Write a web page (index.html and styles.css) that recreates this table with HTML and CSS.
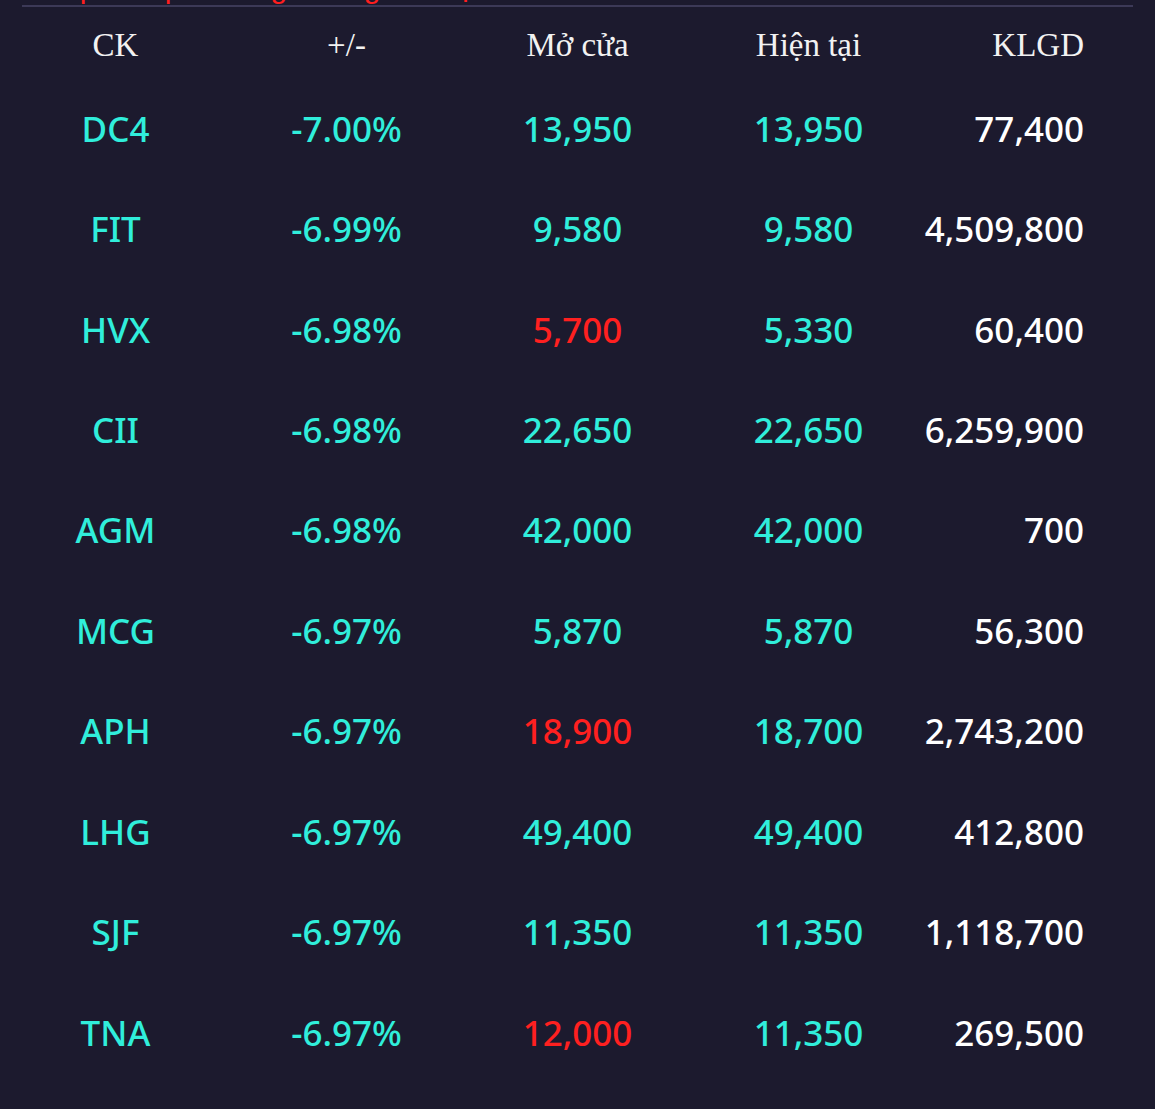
FILE: index.html
```html
<!DOCTYPE html>
<html lang="vi">
<head>
<meta charset="utf-8">
<title>Top giảm giá</title>
<link rel="stylesheet" href="styles.css">
</head>
<body>
<div class="page">
  <div class="title-clip"><div class="title">Top cổ phiếu giảm giá mạnh nhất</div></div>
  <div class="rule"></div>
  <div class="table">
    <div class="row head">
      <div class="c">CK</div><div class="c">+/-</div><div class="c">Mở cửa</div><div class="c">Hiện tại</div><div class="c r">KLGD</div>
    </div>
    <div class="row"><div class="c cy">DC4</div><div class="c cy">-7.00%</div><div class="c cy">13,950</div><div class="c cy">13,950</div><div class="c r wh">77,400</div></div>
    <div class="row"><div class="c cy">FIT</div><div class="c cy">-6.99%</div><div class="c cy">9,580</div><div class="c cy">9,580</div><div class="c r wh">4,509,800</div></div>
    <div class="row"><div class="c cy">HVX</div><div class="c cy">-6.98%</div><div class="c rd">5,700</div><div class="c cy">5,330</div><div class="c r wh">60,400</div></div>
    <div class="row"><div class="c cy">CII</div><div class="c cy">-6.98%</div><div class="c cy">22,650</div><div class="c cy">22,650</div><div class="c r wh">6,259,900</div></div>
    <div class="row"><div class="c cy">AGM</div><div class="c cy">-6.98%</div><div class="c cy">42,000</div><div class="c cy">42,000</div><div class="c r wh">700</div></div>
    <div class="row"><div class="c cy">MCG</div><div class="c cy">-6.97%</div><div class="c cy">5,870</div><div class="c cy">5,870</div><div class="c r wh">56,300</div></div>
    <div class="row"><div class="c cy">APH</div><div class="c cy">-6.97%</div><div class="c rd">18,900</div><div class="c cy">18,700</div><div class="c r wh">2,743,200</div></div>
    <div class="row"><div class="c cy">LHG</div><div class="c cy">-6.97%</div><div class="c cy">49,400</div><div class="c cy">49,400</div><div class="c r wh">412,800</div></div>
    <div class="row"><div class="c cy">SJF</div><div class="c cy">-6.97%</div><div class="c cy">11,350</div><div class="c cy">11,350</div><div class="c r wh">1,118,700</div></div>
    <div class="row"><div class="c cy">TNA</div><div class="c cy">-6.97%</div><div class="c rd">12,000</div><div class="c cy">11,350</div><div class="c r wh">269,500</div></div>
  </div>
</div>
</body>
</html>
```

FILE: styles.css
```css
html, body {
  margin: 0;
  padding: 0;
  background: #1c1a2e;
}
.page {
  width: 1155px;
  height: 1109px;
  overflow: hidden;
  background: #1c1a2e;
}
.title-clip {
  height: 5px;
  overflow: hidden;
  padding-left: 40px;
}
.title {
  margin-top: -30px;
  font-family: "Liberation Sans", sans-serif;
  font-size: 30px;
  line-height: 36px;
  color: #ff1e1e;
  letter-spacing: 4px;
}
.rule {
  height: 2px;
  margin: 0 22px;
  background: #3c3957;
}
.table {
  display: flex;
  flex-direction: column;
}
.row {
  display: grid;
  grid-template-columns: repeat(5, 231px);
  height: 100.44px;
  line-height: 100.44px;
  font-family: "Noto Sans", "Open Sans", sans-serif;
  font-weight: 500;
  font-size: 35px;
  white-space: nowrap;
}
.row.head {
  height: 65.7px;
  line-height: 65.7px;
  padding-top: 6px;
  font-family: "Liberation Serif", serif;
  font-weight: 400;
  font-size: 33px;
  color: #f2f2f2;
}
.c {
  text-align: center;
}
.c.r {
  text-align: right;
  padding-right: 71px;
}
.cy { color: #30eedb; }
.rd { color: #ff2020; }
.wh { color: #ffffff; }
```
